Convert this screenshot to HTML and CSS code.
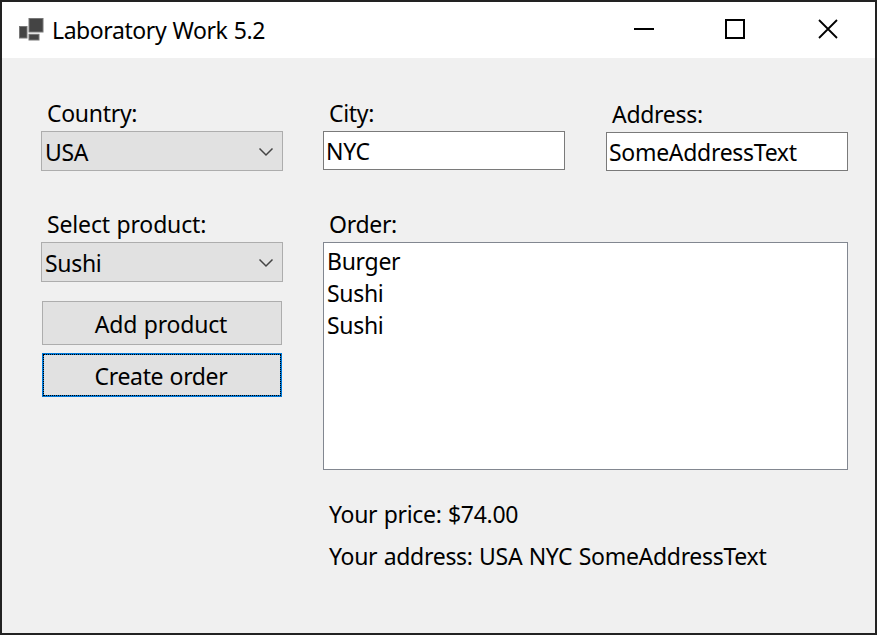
FILE: index.html
```
<!DOCTYPE html>
<html lang="en">
<head>
<meta charset="utf-8">
<title>Laboratory Work 5.2</title>
<link rel="stylesheet" href="styles.css">
</head>
<body>
<div class="window">
  <header class="titlebar">
    <svg class="app-icon" width="28" height="26" viewBox="0 0 28 26" fill="#444" stroke="#777" stroke-width="1">
      <rect x="1.5" y="8.5" width="7.5" height="11.5"/>
      <rect x="11" y="0.5" width="14" height="13.5"/>
      <rect x="11" y="16.3" width="10" height="5.7"/>
    </svg>
    <h1 class="title">Laboratory Work 5.2</h1>
    <svg class="controls" width="206" height="24" viewBox="0 0 206 24" fill="none" stroke="#000" stroke-width="2">
      <path d="M1 12H21"/>
      <rect x="93" y="3" width="18" height="18"/>
      <path d="M186 3L204 21M204 3L186 21" stroke-width="1.8"/>
    </svg>
  </header>
  <main class="form">
    <section class="left">
      <label class="label">Country:</label>
      <div class="combo">USA<svg width="16" height="10" viewBox="0 0 16 10"><path d="M1.5 1.5L8 8L14.5 1.5"/></svg></div>
      <label class="label product-label">Select product:</label>
      <div class="combo">Sushi<svg width="16" height="10" viewBox="0 0 16 10"><path d="M1.5 1.5L8 8L14.5 1.5"/></svg></div>
      <button class="button add">Add product</button>
      <button class="button create">Create order</button>
    </section>
    <section class="right">
      <div class="fields">
        <div class="field"><label class="label">City:</label><div class="input">NYC</div></div>
        <div class="field address"><label class="label">Address:</label><div class="input">SomeAddressText</div></div>
      </div>
      <label class="label order-label">Order:</label>
      <div class="list"><div>Burger</div><div>Sushi</div><div>Sushi</div></div>
      <p class="result price">Your price: $74.00</p>
      <p class="result">Your address: USA NYC SomeAddressText</p>
    </section>
  </main>
</div>
</body>
</html>
```
FILE: styles.css
```
* { box-sizing: border-box; }
body { margin: 0; font: 23px/32px "Noto Sans", sans-serif; letter-spacing: -0.3px; word-spacing: 0.7px; color: #000; }
.window { width: 877px; height: 635px; border: 2px solid #222; background: #f0f0f0; }
.titlebar { height: 56px; background: #fff; display: flex; align-items: center; padding: 0 36px 2px 16px; }
.title { font: inherit; letter-spacing: -0.42px; margin: 2px auto 0 6px; }
.app-icon { margin-top: 3px; }
.form { display: flex; gap: 40px; padding: 39px 27px 0 39px; }
.left { width: 242px; display: flex; flex-direction: column; }
.right { width: 525px; }
.label { display: block; height: 34px; padding-left: 6px; }
.combo { display: flex; height: 40px; border: 1px solid #adadad; background: #e1e1e1; align-items: center; justify-content: space-between; padding: 1px 8px 0 3px; }
.combo svg { fill: none; stroke: #444; stroke-width: 1.5; }
.product-label { margin-top: 37px; letter-spacing: -0.15px; }
.button { font: inherit; letter-spacing: -0.2px; word-spacing: inherit; color: inherit; height: 44px; margin: 0 1px; padding: 1px 2px 0 0; border: 1px solid #adadad; background: #e1e1e1; }
.add { margin-top: 19px; }
.create { margin-top: 8px; letter-spacing: -0.35px; border: 2px solid #0078d7; outline: 1px dotted #000; outline-offset: -2px; }
.fields { display: flex; gap: 41px; height: 111px; }
.field { width: 242px; }
.address { padding-top: 1px; }
.input { height: 39px; border: 1px solid #7a7a7a; background: #fff; padding: 3px 2px; }
.list { height: 228px; border: 1px solid #828790; background: #fff; padding: 2px 3px; }
.result { margin: 10px 0 0 6px; }
.price { margin-top: 28px; }
```
